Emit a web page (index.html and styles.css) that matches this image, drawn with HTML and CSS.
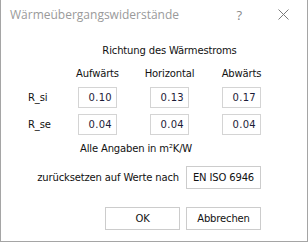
FILE: index.html
```html
<!DOCTYPE html>
<html lang="de">
<head>
<meta charset="utf-8">
<title>Wärmeübergangswiderstände</title>
<link rel="stylesheet" href="styles.css">
</head>
<body>
<div class="window">
  <div class="titlebar">
    <span class="title">Wärmeübergangswiderstände</span>
    <span class="help">?</span>
    <svg class="close" width="11" height="11" viewBox="0 0 11 11"><path d="M0.5 0.5 L10.5 10.5 M10.5 0.5 L0.5 10.5" stroke="#7a7a7a" stroke-width="1" fill="none"/></svg>
  </div>
  <div class="content">
    <div class="heading">Richtung des Wärmestroms</div>
    <div class="grid">
      <div class="cell"></div>
      <div class="colhead">Aufwärts</div>
      <div class="colhead">Horizontal</div>
      <div class="colhead">Abwärts</div>
      <div class="label">R_si</div>
      <div class="field">0.10</div>
      <div class="field">0.13</div>
      <div class="field">0.17</div>
      <div class="label">R_se</div>
      <div class="field">0.04</div>
      <div class="field">0.04</div>
      <div class="field">0.04</div>
    </div>
    <div class="note">Alle Angaben in m²K/W</div>
    <div class="reset-row">
      <span class="reset-label">zurücksetzen auf Werte nach</span>
      <button class="btn">EN ISO 6946</button>
    </div>
    <div class="actions">
      <button class="btn">OK</button>
      <button class="btn">Abbrechen</button>
    </div>
  </div>
</div>
</body>
</html>
```
FILE: styles.css
```css
html, body {
  margin: 0;
  padding: 0;
  background: #ffffff;
}
.window {
  box-sizing: border-box;
  width: 308px;
  height: 242px;
  border: 1px solid #a5a5a5;
  border-top: 0;
  background: #ffffff;
  font-family: "DejaVu Sans", sans-serif;
  font-size: 10px;
  letter-spacing: -0.15px;
  color: #111111;
}
.titlebar {
  height: 31px;
  display: flex;
  align-items: flex-start;
  letter-spacing: 0;
}
.title {
  font-family: "Open Sans", sans-serif;
  font-size: 12px;
  line-height: 16px;
  color: #9a9a9a;
  margin: 7px 0 0 9px;
  white-space: nowrap;
}
.help {
  font-family: "Open Sans", sans-serif;
  font-size: 13px;
  line-height: 16px;
  color: #8a8a8a;
  margin: 7px 0 0 auto;
}
.close {
  display: block;
  margin: 9px 18px 0 36px;
}
.content {
  padding: 13px 46px 0 26px;
}
.heading {
  margin-left: 51px;
  text-align: center;
  line-height: 13px;
  white-space: nowrap;
  margin-bottom: 10px;
}
.grid {
  display: grid;
  grid-template-columns: 18px 39px 39px 39px;
  grid-template-rows: 14px 21px 21px;
  column-gap: 33px;
  row-gap: 6px;
  line-height: 13px;
}
.colhead {
  justify-self: center;
  white-space: nowrap;
}
.label {
  align-self: center;
  white-space: nowrap;
  margin-left: 1px;
}
.field {
  box-sizing: border-box;
  height: 21px;
  border: 1px solid #d4d4d4;
  text-align: right;
  padding: 3px 4px 0 0;
  color: #1c1c38;
  letter-spacing: 0.3px;
}
.note {
  margin: 7px 0 0 53px;
  line-height: 13px;
}
.reset-row {
  display: flex;
  justify-content: flex-end;
  align-items: center;
  gap: 7px;
  margin-top: 11px;
}
.reset-label {
  white-space: nowrap;
}
.btn {
  box-sizing: border-box;
  width: 75px;
  height: 23px;
  border: 1px solid #cccccc;
  background: #ffffff;
  font-family: "DejaVu Sans", sans-serif;
  font-size: 10px;
  letter-spacing: -0.15px;
  color: #111111;
  padding: 0;
  margin: 0;
}
.actions {
  display: flex;
  justify-content: flex-end;
  gap: 6px;
  margin-top: 18px;
}
```
